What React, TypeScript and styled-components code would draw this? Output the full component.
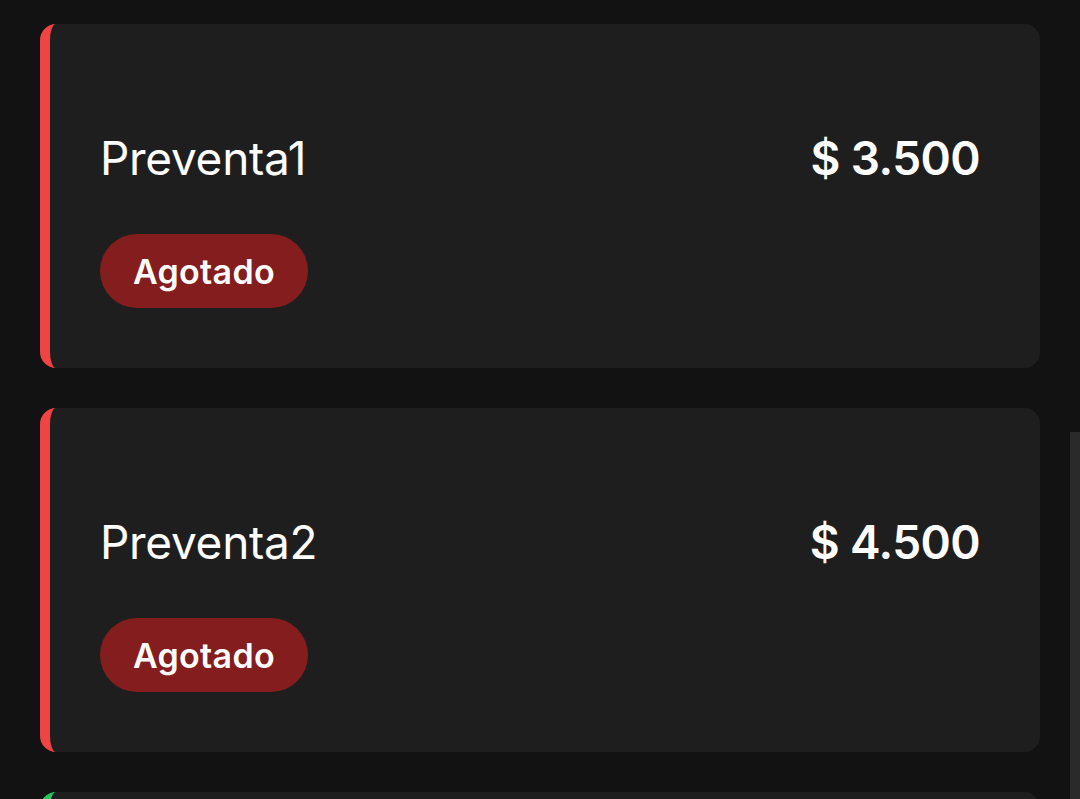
import React from "react";
import styled, { createGlobalStyle } from "styled-components";

const GlobalStyle = createGlobalStyle`
  html, body {
    margin: 0;
    padding: 0;
    background: #121212;
    overflow: hidden;
    font-family: Inter, "Noto Sans", sans-serif;
    color: #ffffff;
  }
`;

const Page = styled.main`
  display: flex;
  flex-direction: column;
  gap: 40px;
  padding: 24px 40px;
  height: 799px;
  box-sizing: border-box;
  overflow: hidden;
`;

const Card = styled.section<{ $accent: string }>`
  flex-shrink: 0;
  display: flex;
  flex-direction: column;
  align-items: flex-start;
  box-sizing: border-box;
  height: 344px;
  padding: 106px 60px 60px 50px;
  background: #1e1e1e;
  border-radius: 16px;
  border-left: 10px solid ${(p) => p.$accent};
`;

const TitleRow = styled.div`
  display: flex;
  justify-content: space-between;
  align-items: center;
  width: 100%;
  font-size: 46px;
  line-height: 56px;
`;

const Name = styled.span`
  font-weight: 400;
  letter-spacing: -0.3px;
`;

const Price = styled.span`
  font-weight: 600;
  letter-spacing: -0.6px;
`;

const Badge = styled.span`
  margin-top: 48px;
  display: inline-flex;
  align-items: center;
  height: 74px;
  box-sizing: border-box;
  padding: 0 33px;
  border-radius: 999px;
  background: #841e1e;
  font-size: 34px;
  font-weight: 600;
  letter-spacing: 0.3px;
  color: #ffffff;
`;

const ScrollThumb = styled.div`
  position: fixed;
  right: 0;
  top: 432px;
  width: 10px;
  height: 400px;
  background: #2a2a2a;
`;

const tickets = [
  { name: "Preventa1", price: "$ 3.500" },
  { name: "Preventa2", price: "$ 4.500" },
];

export default function App() {
  return (
    <>
      <GlobalStyle />
      <Page>
        {tickets.map((t) => (
          <Card key={t.name} $accent="#ef4444">
            <TitleRow>
              <Name>{t.name}</Name>
              <Price>{t.price}</Price>
            </TitleRow>
            <Badge>Agotado</Badge>
          </Card>
        ))}
        <Card $accent="#22c55e" />
      </Page>
      <ScrollThumb />
    </>
  );
}
